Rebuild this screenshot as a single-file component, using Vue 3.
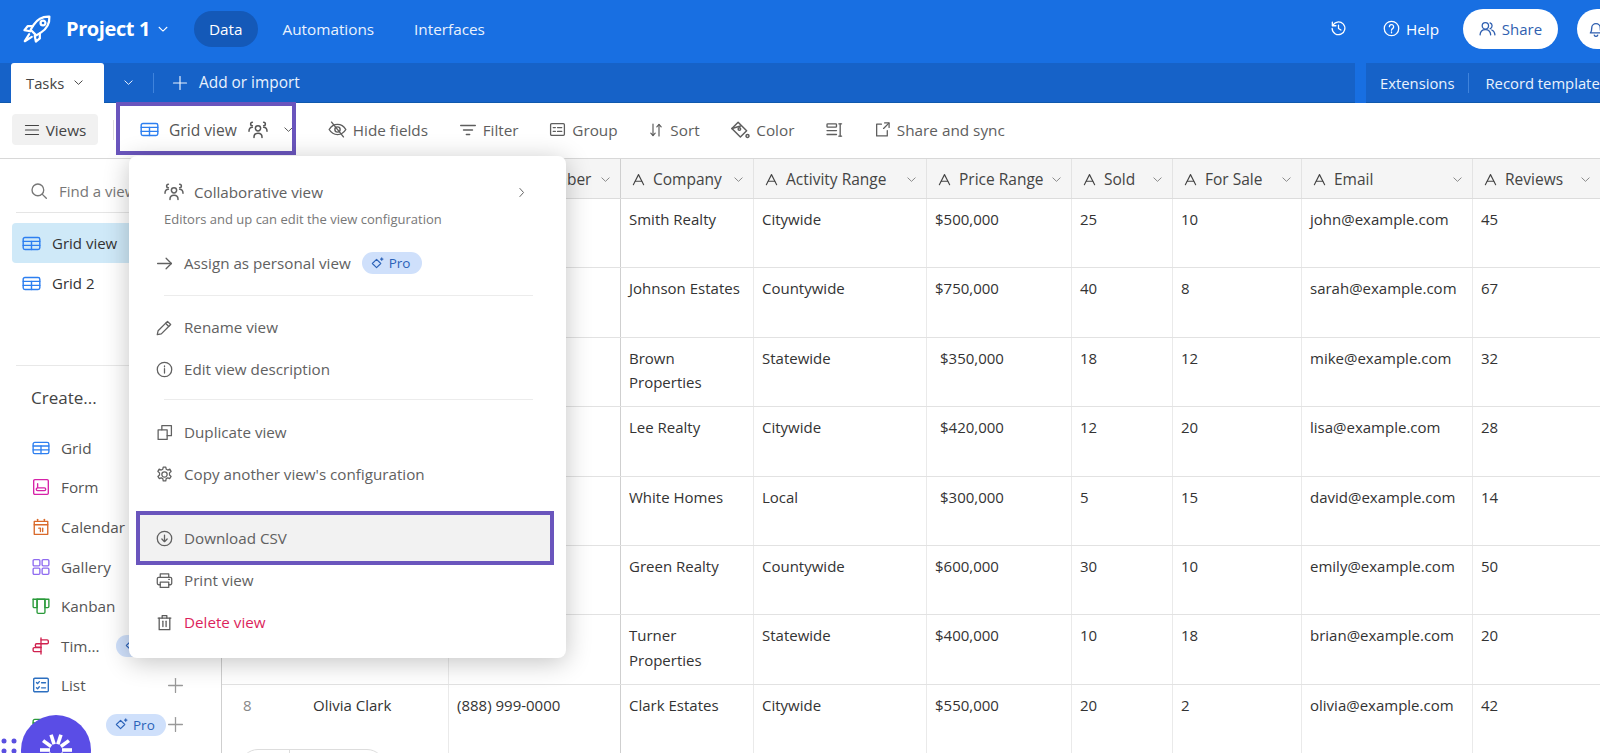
<script setup>
import { h } from 'vue'

const paths = {
  grid: ['M2.5 3h11A1.5 1.5 0 0 1 15 4.5v7a1.5 1.5 0 0 1-1.5 1.5h-11A1.5 1.5 0 0 1 1 11.500v-7A1.500 1.500 0 0 1 2.500 3z', 'M1 6.200h14', 'M1 9.600h14', 'M8 6.200V13'],
  chev: ['M3.500 6l4.500 4.300L12.500 6'],
  chevr: ['M6 3l4.500 5L6 13'],
  people: ['M8 4.500a2.100 2.100 0 1 1 0 4.200 2.100 2.100 0 0 1 0-4.200z', 'M4.800 14v-.5c0-1.800 1.400-3 3.200-3s3.200 1.200 3.200 3v.5', 'M3.500 1.800a1.400 1.400 0 0 0 0 2.800', 'M.8 9c0-2 1-3.200 2.700-3.200', 'M12.500 1.800a1.400 1.400 0 0 1 0 2.800', 'M15.200 9c0-2-1-3.200-2.700-3.200'],
  hide: ['M1 8s2.600-4.300 7-4.300S15 8 15 8s-2.600 4.300-7 4.300S1 8 1 8z', 'M8 5.800a2.200 2.200 0 1 1 0 4.400 2.200 2.200 0 0 1 0-4.400z', 'M3 1.800l10 12.400'],
  filter: ['M1.500 4h13', 'M4 8h8', 'M6.500 12h3'],
  group: ['M2.500 2.500h11a1 1 0 0 1 1 1v9a1 1 0 0 1-1 1h-11a1 1 0 0 1-1-1v-9a1 1 0 0 1 1-1z', 'M4 6.200h2', 'M8 6.200h4', 'M4 9.800h2', 'M8 9.800h4'],
  sort: ['M5 2v11.500', 'M2.800 11.200L5 13.500l2.200-2.300', 'M11 14V2.500', 'M8.800 4.800L11 2.500l2.200 2.300'],
  color: ['M6.500 1.800l6.800 6.800-5 5-6.800-6.800z', 'M1.500 6.800l7-2', 'M7.500 6.200a1 1 0 1 1 0 2 1 1 0 0 1 0-2z', 'M14 11.500a1.200 1.200 0 1 1 0 2.400 1.200 1.200 0 0 1 0-2.400z'],
  rowh: ['M2.500 2.500h7a.7.7 0 0 1 .7.7v1.600a.7.7 0 0 1-.7.7h-7a.7.7 0 0 1-.7-.7V3.200a.7.7 0 0 1 .7-.7z', 'M1.800 8.500h8.400', 'M1.800 12h8.400', 'M13.500 2.500v11', 'M12.300 2.500h2.400', 'M12.300 13.500h2.400'],
  share: ['M7 3H2.500v11h10V9', 'M9 7l5-5', 'M10 1.800h4.200V6'],
  search: ['M7 1.800a5.200 5.200 0 1 1 0 10.400A5.200 5.200 0 0 1 7 1.800z', 'M11 11l3.500 3.500'],
  arrow: ['M1.500 8h13', 'M9.500 3l5 5-5 5'],
  pencil: ['M10.800 2.200l3 3-8.800 8.800-3.800.8.800-3.800z', 'M9 4l3 3'],
  info: ['M8 1.200a6.800 6.800 0 1 1 0 13.600A6.800 6.800 0 0 1 8 1.200z', 'M8 7.200v4.200', 'M8 4.600v.8'],
  copy: ['M2 5.500h8.500V14.500H2z', 'M5.500 5.500V1.500H14.500V11H10.500'],
  gear: ['M8 5.500a2.500 2.500 0 1 1 0 5 2.500 2.500 0 0 1 0-5z', 'M6.800 1h2.400l.4 2 1.500.8 1.900-.8 1.200 2.100-1.500 1.400v1.900l1.500 1.400-1.200 2-1.900-.7-1.500.8-.4 2.100H6.800l-.4-2.100-1.500-.8-1.900.7-1.200-2 1.500-1.400V6.500L1.800 5.100 3 3l1.900.8 1.500-.8z'],
  download: ['M8 1.200a6.800 6.800 0 1 1 0 13.600A6.800 6.800 0 0 1 8 1.200z', 'M8 4.800v6', 'M5.500 8.500L8 11l2.500-2.500'],
  print: ['M4 5V1.800h8V5', 'M4 12H2.500a1.300 1.300 0 0 1-1.300-1.300V6.300A1.300 1.300 0 0 1 2.500 5h11a1.300 1.300 0 0 1 1.300 1.300v4.400A1.300 1.300 0 0 1 13.500 12H12', 'M4 9.500h8v5H4z', 'M12 7h.6'],
  trash: ['M2 3.800h12', 'M5.800 3.800V1.500h4.400v2.300', 'M3 3.800v11h10v-11', 'M6.500 6.800v5', 'M9.500 6.800v5'],
  plus: ['M8 1.500v13', 'M1.500 8h13'],
  history: ['M2.600 5.200A6 6 0 1 1 2 8', 'M2.200 2v3.400h3.400', 'M8 4.800V8l2.300 1.400'],
  help: ['M8 1.200a6.800 6.800 0 1 1 0 13.600A6.800 6.800 0 0 1 8 1.200z', 'M6 6.300a2 2 0 1 1 3.200 1.600C8.500 8.400 8 8.800 8 9.600', 'M8 11.300v.7'],
  users: ['M6 2.500a3 3 0 1 1 0 6 3 3 0 0 1 0-6z', 'M1 14c.2-3 2.300-5 5-5s4.800 2 5 5', 'M10.400 2.700a3 3 0 0 1 0 5.600', 'M12 9.400c1.700.7 2.800 2.400 3 4.600'],
  bell: ['M3 11.500c1-1 1.200-2 1.200-4.500a3.800 3.800 0 0 1 7.600 0c0 2.500.2 3.500 1.200 4.500z', 'M6.500 13.500a1.600 1.600 0 0 0 3 0'],
  rocket: ['M14.600 1.400c-3.600-.2-6.400 1.300-8.400 4.400l-1.600 2.600 3 3 2.600-1.600c3.100-2 4.600-4.800 4.400-8.400z', 'M11.200 3.500a1.300 1.300 0 1 1 0 2.600 1.300 1.300 0 0 1 0-2.600z', 'M5.600 6.500H3L1.300 8.600l3 .6', 'M9.500 10.400V13l-2.100 1.700-.6-3', 'M3.800 10.800L1.500 14.500l3.700-2.300'],
  menu: ['M1.500 3.500h13', 'M1.500 8h13', 'M1.500 12.500h13'],
  field: ['M2.500 13.500L8 2.800l5.500 10.700', 'M4.500 9.800h7'],
  form: ['M2.500 1.500h11a1 1 0 0 1 1 1v11a1 1 0 0 1-1 1h-11a1 1 0 0 1-1-1v-11a1 1 0 0 1 1-1z', 'M5 5v3.500', 'M5 8.800a1.200 1.200 0 0 0 0 2.400h6a1.200 1.200 0 0 0 0-2.400z'],
  calendar: ['M2 3h12v11.500H2z', 'M2 6h12', 'M5 1.200V3', 'M11 1.200V3', 'M6 9h1.500v3', 'M9.500 9v3'],
  gallery: ['M2 1.500h4a1 1 0 0 1 1 1V6a1 1 0 0 1-1 1H2a1 1 0 0 1-1-1V2.500a1 1 0 0 1 1-1z', 'M10 1.500h4a1 1 0 0 1 1 1V6a1 1 0 0 1-1 1h-4a1 1 0 0 1-1-1V2.500a1 1 0 0 1 1-1z', 'M2 9h4a1 1 0 0 1 1 1v3.500a1 1 0 0 1-1 1H2a1 1 0 0 1-1-1V10a1 1 0 0 1 1-1z', 'M10 9h4a1 1 0 0 1 1 1v3.500a1 1 0 0 1-1 1h-4a1 1 0 0 1-1-1V10a1 1 0 0 1 1-1z'],
  kanban: ['M1 2h14v6.500a1 1 0 0 1-1 1h-2.500V2', 'M4.500 2v7.500H2a1 1 0 0 1-1-1V2', 'M4.500 2h7v11.500a1 1 0 0 1-1 1h-5a1 1 0 0 1-1-1z'],
  timeline: ['M8 .800v14.400', 'M8 2.500h5.500a1 1 0 0 1 1 1v1.500a1 1 0 0 1-1 1H8', 'M8 6h-4a1 1 0 0 0-1 1v1a1 1 0 0 0 1 1h4', 'M8 9.500H2a1 1 0 0 0-1 1V12a1 1 0 0 0 1 1h6'],
  list: ['M2.500 2h11a1 1 0 0 1 1 1v10a1 1 0 0 1-1 1h-11a1 1 0 0 1-1-1V3a1 1 0 0 1 1-1z', 'M4 5.800l1 1 1.500-1.800', 'M4 10.400l1 1 1.500-1.800', 'M8.500 6h3.500', 'M8.500 10.500h3.500'],
  spark: ['M7 3.500l4.500 4.500L7 12.500 2.500 8z', 'M12.500 2v2.600', 'M11.200 3.300h2.600']
}

const Ico = (props) => h('svg', {
  width: props.size || 16,
  height: props.size || 16,
  viewBox: '0 0 16 16',
  fill: 'none',
  stroke: 'currentColor',
  'stroke-width': props.sw || 1.2,
  'stroke-linecap': 'round',
  'stroke-linejoin': 'round'
}, paths[props.name].map((d) => h('path', { d })))
Ico.props = ['name', 'size', 'sw']

const tools = [
  { icon: 'hide', label: 'Hide fields', size: 19 },
  { icon: 'filter', label: 'Filter', size: 18 },
  { icon: 'group', label: 'Group', size: 17 },
  { icon: 'sort', label: 'Sort', size: 16 },
  { icon: 'color', label: 'Color', size: 20 },
  { icon: 'rowh', label: '', size: 18 },
  { icon: 'share', label: 'Share and sync', size: 17 }
]

const widths = [227, 172, 133, 173, 145, 101, 129, 171, 128]
const headers = ['', 'Phone Number', 'Company', 'Activity Range', 'Price Range', 'Sold', 'For Sale', 'Email', 'Reviews']
const rows = [
  { num: '', name: '', cells: ['', 'Smith Realty', 'Citywide', '$500,000', '25', '10', 'john@example.com', '45'] },
  { num: '', name: '', cells: ['', 'Johnson Estates', 'Countywide', '$750,000', '40', '8', 'sarah@example.com', '67'] },
  { num: '', name: '', cells: ['', 'Brown Properties', 'Statewide', '$350,000', '18', '12', 'mike@example.com', '32'], indent: true },
  { num: '', name: '', cells: ['', 'Lee Realty', 'Citywide', '$420,000', '12', '20', 'lisa@example.com', '28'], indent: true },
  { num: '', name: '', cells: ['', 'White Homes', 'Local', '$300,000', '5', '15', 'david@example.com', '14'], indent: true },
  { num: '', name: '', cells: ['', 'Green Realty', 'Countywide', '$600,000', '30', '10', 'emily@example.com', '50'] },
  { num: '', name: '', cells: ['', 'Turner Properties', 'Statewide', '$400,000', '10', '18', 'brian@example.com', '20'] },
  { num: '8', name: 'Olivia Clark', cells: ['(888) 999-0000', 'Clark Estates', 'Citywide', '$550,000', '20', '2', 'olivia@example.com', '42'] }
]

const creators = [
  { icon: 'grid', label: 'Grid', color: '#2d7ff0' },
  { icon: 'form', label: 'Form', color: '#d622a8' },
  { icon: 'calendar', label: 'Calendar', color: '#d9692a' },
  { icon: 'gallery', label: 'Gallery', color: '#8f6bf0' },
  { icon: 'kanban', label: 'Kanban', color: '#2a9a3a' },
  { icon: 'timeline', label: 'Tim...', color: '#d0224f', pill: 'near' },
  { icon: 'list', label: 'List', color: '#2c6fc0', add: true },
  { icon: 'grid', label: '', color: '#2a9a3a', pill: 'far', add: true }
]

const rays = Array.from({ length: 10 }, (_, i) => {
  const a = (i * Math.PI) / 5
  return { x1: 35 + 6 * Math.cos(a), y1: 35 + 6 * Math.sin(a), x2: 35 + 16 * Math.cos(a), y2: 35 + 16 * Math.sin(a) }
})
</script>

<template>
  <div class="app">
    <header class="topbar">
      <Ico name="rocket" :size="30" class="logo" />
      <span class="project">Project 1</span>
      <Ico name="chev" :size="14" class="project-chev" />
      <nav class="nav">
        <span class="nav-item active">Data</span>
        <span class="nav-item">Automations</span>
        <span class="nav-item">Interfaces</span>
      </nav>
      <div class="top-right">
        <Ico name="history" :size="17" class="history" />
        <Ico name="help" :size="17" />
        <span class="help">Help</span>
        <span class="share-pill"><Ico name="users" :size="17" />Share</span>
        <span class="bell-pill"><Ico name="bell" :size="18" /></span>
      </div>
    </header>

    <div class="tabbar">
      <div class="tab-main">
        <div class="tab">Tasks<Ico name="chev" :size="13" /></div>
        <Ico name="chev" :size="13" class="tab-more" />
        <span class="tab-sep"></span>
        <Ico name="plus" :size="16" class="tab-plus" />
        <span class="add-import">Add or import</span>
      </div>
      <div class="tab-side">
        <span>Extensions</span>
        <span class="tab-sep side"></span>
        <span>Record templates</span>
      </div>
    </div>

    <div class="toolbar">
      <div class="views-btn"><Ico name="menu" :size="16" />Views</div>
      <span class="tool-sep"></span>
      <div class="grid-view">
        <Ico name="grid" :size="19" class="blue" />
        <span class="grid-view-label">Grid view</span>
        <Ico name="people" :size="20" class="gv-people" />
        <Ico name="chev" :size="13" class="gv-chev" />
      </div>
      <div class="tools">
        <div v-for="t in tools" :key="t.icon" class="tool">
          <Ico :name="t.icon" :size="t.size" />
          <span v-if="t.label">{{ t.label }}</span>
        </div>
      </div>
    </div>

    <div class="main">
      <aside class="sidebar">
        <div class="find"><Ico name="search" :size="18" /><span>Find a view</span></div>
        <div class="view-list">
          <div class="view-item selected"><Ico name="grid" :size="19" class="blue" />Grid view</div>
          <div class="view-item"><Ico name="grid" :size="19" class="blue" />Grid 2</div>
        </div>
        <div class="create">
          <div class="create-title">Create...</div>
          <div v-for="c in creators" :key="c.icon + c.label" class="create-item">
            <Ico :name="c.icon" :size="18" :style="{ color: c.color }" />
            <span class="create-label" :class="{ blank: !c.label }">{{ c.label }}</span>
            <span v-if="c.pill" class="pro" :class="c.pill"><Ico name="spark" :size="15" />Pro</span>
            <Ico v-if="c.add" name="plus" :size="17" class="create-plus" />
          </div>
        </div>
      </aside>

      <section class="table">
        <div class="thead">
          <div v-for="(w, i) in headers" :key="i" class="th" :class="{ split: i === 1 }" :style="{ width: widths[i] + 'px' }">
            <template v-if="w">
              <Ico name="field" :size="15" />
              <span class="th-label">{{ w }}</span>
              <Ico name="chev" :size="13" class="th-chev" />
            </template>
          </div>
        </div>
        <div v-for="(r, ri) in rows" :key="ri" class="tr">
          <div class="td first" :style="{ width: widths[0] + 'px' }">
            <span class="num">{{ r.num }}</span>
            <span>{{ r.name }}</span>
          </div>
          <div
            v-for="(c, ci) in r.cells"
            :key="ci"
            class="td"
            :class="{ split: ci === 0, indent: ci === 3 && r.indent }"
            :style="{ width: widths[ci + 1] + 'px' }"
          >{{ c }}</div>
        </div>
        <div class="add-pill"><span class="add-a"></span></div>
      </section>
    </div>

    <div class="mark top-mark"></div>

    <div class="menu">
      <div class="collab">
        <Ico name="people" :size="20" />
        <span>Collaborative view</span>
        <Ico name="chevr" :size="13" class="collab-chev" />
      </div>
      <div class="collab-sub">Editors and up can edit the view configuration</div>
      <div class="item"><Ico name="arrow" :size="17" />Assign as personal view<span class="pro inline"><Ico name="spark" :size="15" />Pro</span></div>
      <div class="rule"></div>
      <div class="item"><Ico name="pencil" :size="17" />Rename view</div>
      <div class="item"><Ico name="info" :size="17" />Edit view description</div>
      <div class="rule low"></div>
      <div class="item"><Ico name="copy" :size="17" />Duplicate view</div>
      <div class="item"><Ico name="gear" :size="17" />Copy another view's configuration</div>
      <div class="item marked"><Ico name="download" :size="17" />Download CSV</div>
      <div class="item"><Ico name="print" :size="17" />Print view</div>
      <div class="item danger"><Ico name="trash" :size="17" />Delete view</div>
    </div>

    <svg class="dots" width="20" height="30" viewBox="0 0 20 30">
      <circle v-for="p in [[4, 8], [14, 8], [4, 18], [14, 18]]" :key="p.join()" :cx="p[0]" :cy="p[1]" r="2.500" fill="#5a4fe0" />
    </svg>
    <svg class="launcher" width="70" height="70" viewBox="0 0 70 70">
      <circle cx="35" cy="35" r="35" fill="#5a4de6" />
      <line v-for="(r, i) in rays" :key="i" :x1="r.x1" :y1="r.y1" :x2="r.x2" :y2="r.y2" stroke="#fff" stroke-width="3.600" />
    </svg>
  </div>
</template>

<style>
html, body { margin: 0; overflow: hidden; background: #fff; }
</style>

<style scoped>
.app {
  position: relative;
  width: 1600px;
  height: 753px;
  overflow: hidden;
  display: flex;
  flex-direction: column;
  background: #fff;
  color: #333;
  font-family: "Open Sans", "Noto Sans", sans-serif;
  font-size: 15px;
}
.topbar {
  height: 63px;
  flex: none;
  box-sizing: border-box;
  background: #186fe2;
  color: #fff;
  display: flex;
  align-items: center;
  padding: 0 0 6px 22px;
}
.logo { flex: none; }
.project {
  margin-left: 14px;
  font-size: 20px;
  font-weight: 700;
  letter-spacing: -0.4px;
}
.project-chev { margin-left: 6px; }
.nav { display: flex; align-items: center; margin-left: 24px; }
.nav-item { font-size: 15.300px; padding: 0 12px; color: #eaf2fd; }
.nav-item.active {
  background: #1459b8;
  height: 36px;
  line-height: 36px;
  border-radius: 18px;
  padding: 0 15px;
  margin-right: 13px;
  color: #fff;
}
.nav-item + .nav-item { margin-right: 16px; }
.top-right { margin-left: auto; display: flex; align-items: center; }
.history { margin-right: 36px; }
.help { margin-left: 6px; font-size: 15.300px; }
.share-pill {
  margin-left: 24px;
  width: 95px;
  height: 40px;
  border-radius: 20px;
  background: #fff;
  color: #2f5fb0;
  display: flex;
  align-items: center;
  justify-content: center;
  gap: 6px;
  font-size: 15px;
}
.bell-pill {
  margin-left: 19px;
  margin-right: -23px;
  width: 46px;
  height: 40px;
  border-radius: 20px;
  background: #fff;
  color: #2f5fb0;
  display: flex;
  align-items: center;
  padding-left: 10px;
  box-sizing: border-box;
  flex: none;
}
.tabbar {
  height: 40px;
  flex: none;
  display: flex;
  background: #186fe2;
  color: #eaf2fd;
  box-sizing: border-box;
}
.tab-main, .tab-side {
  background: #1662c8;
  border-bottom: 1px solid #0f58ad;
  box-sizing: border-box;
  display: flex;
  align-items: center;
}
.tab-main { width: 1355px; flex: none; padding-left: 11px; }
.tab-side {
  margin-left: 11px;
  flex: 1;
  min-width: 0;
  overflow: hidden;
  padding-left: 14px;
  white-space: nowrap;
  font-size: 14.800px;
}
.tab {
  width: 93px;
  height: 40px;
  box-sizing: border-box;
  background: #fff;
  color: #444;
  border-radius: 3px 3px 0 0;
  display: flex;
  align-items: center;
  padding-left: 15px;
  gap: 8px;
  font-size: 14.800px;
}
.tab-more { margin-left: 18px; }
.tab-sep { width: 1px; height: 20px; flex: none; background: #3f83dc; margin-left: 18px; }
.tab-sep.side { margin: 0 16px 0 14px; }
.tab-plus { margin-left: 18px; }
.add-import { margin-left: 11px; font-size: 15.400px; }

.toolbar {
  height: 56px;
  flex: none;
  box-sizing: border-box;
  border-bottom: 1px solid #d8d8d8;
  display: flex;
  align-items: center;
  padding: 0 0 2px 12px;
  color: #555;
  font-size: 15.300px;
}
.views-btn {
  width: 86px;
  height: 31px;
  box-sizing: border-box;
  background: #f1f1f1;
  border-radius: 4px;
  display: flex;
  align-items: center;
  justify-content: center;
  gap: 6px;
  color: #444;
}
.tool-sep { width: 1px; height: 20px; background: #ddd; margin-left: 15px; }
.grid-view { display: flex; align-items: center; margin-left: 26px; color: #555; }
.blue { color: #2d7ff0; flex: none; }
.grid-view-label { margin-left: 10px; font-size: 15.600px; }
.gv-people { margin-left: 11px; }
.gv-chev { margin-left: 14px; }
.tools { display: flex; align-items: center; gap: 30.700px; margin-left: 33px; }
.tool { display: flex; align-items: center; gap: 6px; white-space: nowrap; color: #5e5e5e; }

.main { flex: 1; display: flex; min-height: 0; }
.sidebar {
  width: 222px;
  flex: none;
  box-sizing: border-box;
  border-right: 1px solid #cfcfcf;
  display: flex;
  flex-direction: column;
}
.find {
  height: 54px;
  margin: 0 16px;
  padding: 11px 0 0 14px;
  box-sizing: border-box;
  border-bottom: 1px solid #e5e5e5;
  display: flex;
  align-items: center;
  gap: 11px;
  color: #777;
  white-space: nowrap;
}
.view-list {
  height: 153px;
  padding-top: 10px;
  box-sizing: border-box;
  border-bottom: 1px solid #e8e8e8;
  margin: 0 16px;
}
.view-item {
  height: 40px;
  display: flex;
  align-items: center;
  gap: 11px;
  padding-left: 6px;
  color: #333;
  font-size: 15px;
}
.view-item.selected {
  background: #cfe9f8;
  border-radius: 4px;
  margin-left: -4px;
  padding-left: 10px;
}
.create { padding-left: 32px; }
.create-title {
  height: 62px;
  display: flex;
  align-items: center;
  font-size: 17px;
  color: #444;
  margin-left: -1px;
}
.create-item {
  height: 39.600px;
  display: flex;
  align-items: center;
  padding-right: 37px;
  font-size: 15.300px;
  color: #555;
}
.create-label { margin-left: 11px; }
.create-label.blank { width: 0; margin-left: 0; }
.create-plus { margin-left: auto; color: #999; }
.pro {
  display: inline-flex;
  align-items: center;
  gap: 4px;
  height: 22px;
  padding: 0 8px;
  border-radius: 11px;
  background: #cfe0fb;
  color: #2b62b8;
  font-size: 13.500px;
  box-sizing: border-box;
}
.pro.near { margin-left: 16px; }
.pro.far { margin-left: 56px; width: 60px; }
.pro.inline { width: 60px; }

.table { position: relative; flex: 1; min-width: 0; overflow: hidden; color: #333; }
.thead {
  display: flex;
  height: 40px;
  box-sizing: border-box;
  background: #f5f5f5;
  border-bottom: 1px solid #dcdcdc;
}
.th {
  flex: none;
  box-sizing: border-box;
  display: flex;
  align-items: center;
  padding: 1px 8px 0 10px;
  border-right: 1px solid #e3e3e3;
  color: #444;
  font-size: 15.500px;
}
.th-label { margin-left: 7px; white-space: nowrap; }
.th-chev { margin-left: auto; color: #888; flex: none; }
.tr { display: flex; height: 69.400px; box-sizing: border-box; border-bottom: 1px solid #e2e2e2; }
.td {
  flex: none;
  box-sizing: border-box;
  padding: 8px 8px 0;
  border-right: 1px solid #eaeaea;
  line-height: 24.500px;
  font-size: 15px;
  overflow: hidden;
}
.td.split, .th.split { border-right-color: #cfcfcf; }
.td.indent { padding-left: 13px; }
.td.first { display: flex; padding-left: 21px; }
.num { width: 70px; flex: none; color: #888; }
.add-pill {
  position: absolute;
  left: 18px;
  top: 590px;
  width: 145px;
  height: 36px;
  box-sizing: border-box;
  border: 1px solid #ddd;
  border-radius: 18px;
  background: #fff;
}
.add-a { display: block; width: 48px; height: 100%; border-right: 1px solid #ddd; }

.mark {
  position: absolute;
  box-sizing: border-box;
  border: 4px solid #6a55bd;
}
.top-mark { left: 116px; top: 102px; width: 180px; height: 53px; }

.menu {
  position: absolute;
  left: 129px;
  top: 156px;
  width: 437px;
  height: 502px;
  box-sizing: border-box;
  padding: 23px 27px 0;
  background: #fff;
  border-radius: 8px;
  box-shadow: 0 4px 26px rgba(0, 0, 0, 0.24);
  color: #616161;
  font-size: 15.200px;
}
.collab { height: 26px; display: flex; align-items: center; gap: 10px; padding-left: 8px; }
.collab-chev { margin-left: auto; margin-right: 11px; }
.collab-sub { height: 20px; margin-top: 4px; padding-left: 8px; font-size: 13px; line-height: 20px; color: #777; }
.item { position: relative; height: 42px; display: flex; align-items: center; gap: 11px; }
.collab-sub + .item { margin-top: 13px; }
.rule { height: 1px; margin: 11px 6px 10px 8px; background: #ececec; }
.rule.low { margin-top: 9px; margin-bottom: 11px; }
.item.marked { margin-top: 22px; z-index: 0; }
.item.marked::before {
  content: "";
  position: absolute;
  left: -20px;
  right: -15px;
  top: -6px;
  bottom: -6px;
  box-sizing: border-box;
  border: 4px solid #6a55bd;
  background: #f2f2f2;
  z-index: -1;
}
.danger { color: #dc1f5c; }
.danger svg { color: #5a5a5a; }

.dots { position: absolute; left: 0; top: 733px; }
.launcher { position: absolute; left: 21px; top: 715px; }
</style>
